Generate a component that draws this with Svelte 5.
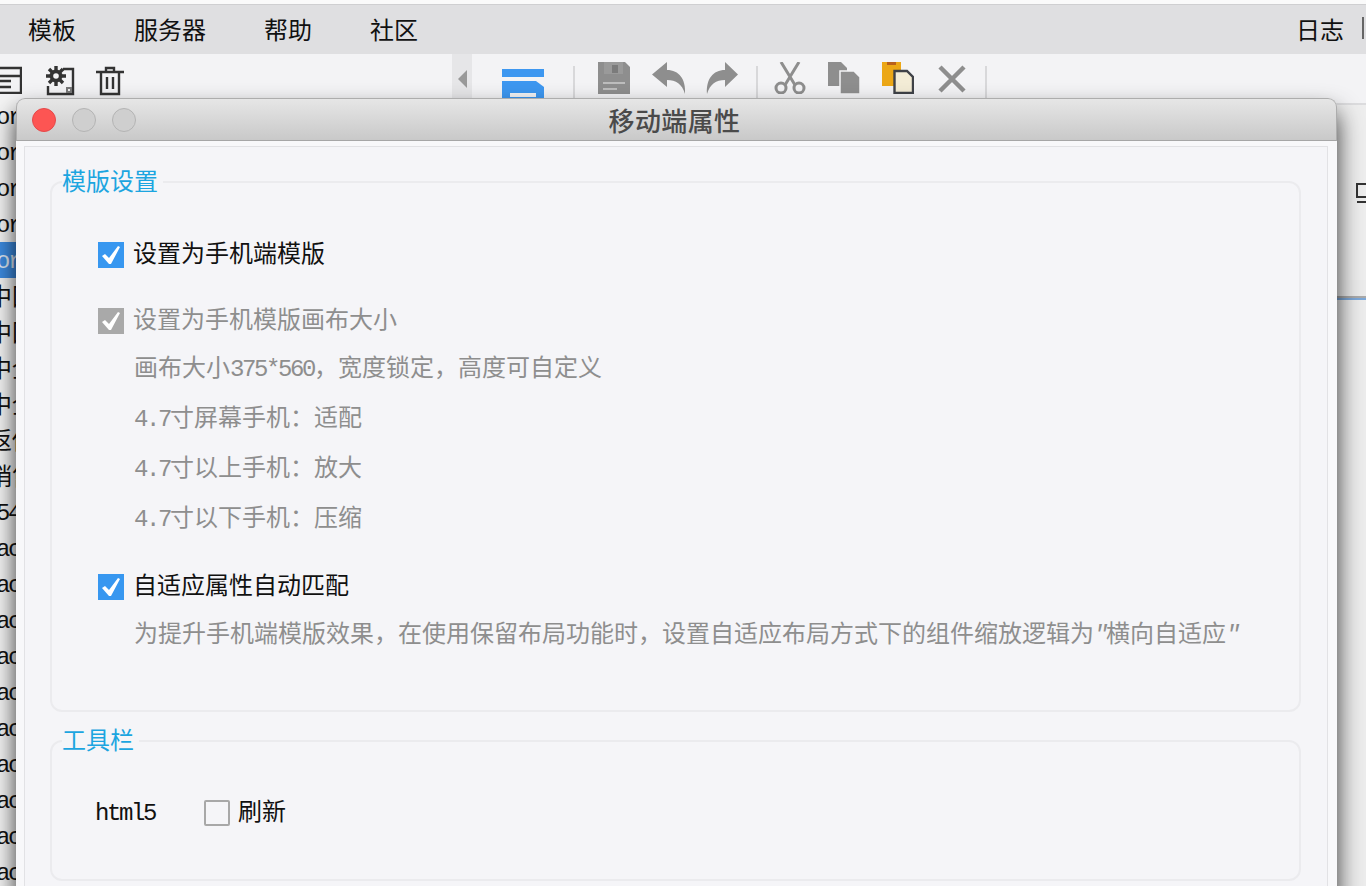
<script lang="ts">
  const menus = ['模板', '服务器', '帮助', '社区'];
  const rows = [
    'or', 'or', 'or', 'or', 'or',
    '中国', '中国', '中全', '中全', '返佣', '销售', '54',
    'ac', 'ac', 'ac', 'ac', 'ac', 'ac', 'ac', 'ac', 'ac', 'ac'
  ];
  const selected = 4;
  const sizes = [
    ['4.7', '寸屏幕手机：适配'],
    ['4.7', '寸以上手机：放大'],
    ['4.7', '寸以下手机：压缩']
  ];
</script>

{#snippet tick()}
  <svg width="18" height="18" viewBox="0 0 18 18" fill="#fff"><path d="M0 10L3 8L7 12L16 0L18 1L9 18H7Z"/></svg>
{/snippet}

<div class="page">
  <div class="menubar">
    {#each menus as m}
      <span>{m}</span>
    {/each}
    <span class="log">日志</span>
    <i class="bar-sep"></i>
  </div>

  <div class="toolbar">
    <div class="tools-left">
      <svg class="ic-form" width="22" height="28" viewBox="0 0 22 28" fill="none" stroke="#333" stroke-width="2.4">
        <path d="M0 2H21V27H0M0 10H21M0 15H11M0 21H11"/>
      </svg>
      <svg class="ic-gear" width="30" height="30" viewBox="0 0 30 30" fill="none">
        <path d="M18 3H28V28H3V20" stroke="#333" stroke-width="2.4"/>
        <path d="M11 0V20M1 10H21M4 3L18 17M18 3L4 17" stroke="#333" stroke-width="3.4"/>
        <circle cx="11" cy="10" r="6.500" fill="#333"/>
        <circle cx="11" cy="10" r="2.800" fill="#f3f3f5"/>
        <rect x="21" y="21" width="6" height="6" fill="#777"/>
        <rect x="23" y="23" width="2" height="2" fill="#eee"/>
      </svg>
      <svg class="ic-trash" width="28" height="30" viewBox="0 0 28 30" fill="none" stroke="#333" stroke-width="2.4">
        <path d="M0 6H28M10 6V2H18V6M5 6V28H23V6M11 11V23M17 11V23"/>
      </svg>
    </div>

    <div class="handle"><i></i></div>

    <svg class="ic-publish" width="44" height="30" viewBox="0 0 44 30">
      <rect x="0" y="0" width="42" height="8" fill="#3d97f0"/>
      <path d="M0 12H34L42 18V30H0Z" fill="#3d97f0"/>
      <rect x="8" y="24" width="26" height="4" fill="#f3f3f5"/>
    </svg>
    <i class="tool-sep first"></i>

    <svg class="ic-save" width="32" height="32" viewBox="0 0 32 32">
      <path d="M0 0H27L32 5V32H0Z" fill="#8e8e8e"/>
      <rect x="6" y="0" width="19" height="12" fill="#9a9a9a"/>
      <rect x="14" y="3" width="6" height="8" fill="#7b7b7b"/>
      <rect x="5" y="20" width="22" height="2" fill="#bdbdbd"/>
      <rect x="5" y="26" width="14" height="2" fill="#bdbdbd"/>
    </svg>
    <svg class="ic-undo" width="34" height="32" viewBox="0 0 34 32">
      <path d="M15 0V8C27 8 34 17 33 32C30 22 24 18 15 18V25L0 12.500Z" fill="#8e8e8e"/>
    </svg>
    <svg class="ic-redo" width="34" height="32" viewBox="0 0 34 32">
      <path d="M19 0V8C7 8 0 17 1 32C4 22 10 18 19 18V25L32 12.500Z" fill="#8e8e8e"/>
    </svg>
    <i class="tool-sep"></i>

    <svg class="ic-cut" width="32" height="32" viewBox="0 0 32 32" fill="none" stroke="#8e8e8e" stroke-width="3">
      <path d="M7 0L21 23M25 0L11 23"/>
      <circle cx="7" cy="26" r="5"/>
      <circle cx="25" cy="26" r="5"/>
    </svg>
    <svg class="ic-copy" width="32" height="32" viewBox="0 0 32 32">
      <path d="M0 0H13L19 6V24H0Z" fill="#8e8e8e"/>
      <path d="M12 9H26L32 15V32H12Z" fill="#8e8e8e" stroke="#f3f3f5" stroke-width="1.500"/>
    </svg>
    <svg class="ic-paste" width="32" height="32" viewBox="0 0 32 32">
      <rect x="0" y="0" width="19" height="24" fill="#eca716"/>
      <rect x="5" y="0" width="9" height="3" fill="#b9601c"/>
      <path d="M12.500 9H25L31 15V31H12.500Z" fill="#f3ecd6" stroke="#3f4248" stroke-width="2.400"/>
    </svg>
    <svg class="ic-close" width="28" height="28" viewBox="0 0 28 28" stroke="#8e8e8e" stroke-width="4.500">
      <path d="M2 2L26 26M26 2L2 26"/>
    </svg>
    <i class="tool-sep last"></i>
  </div>

  <div class="under">
    <ul class="tree">
      {#each rows as r, i}
        <li class:sel={i === selected} class:cjk={/[^\x00-\x7f]/.test(r)}>{r}</li>
      {/each}
    </ul>
    <div class="side">
      <svg width="20" height="22" viewBox="0 0 20 22" fill="none" stroke="#333" stroke-width="2">
        <path d="M1 2H19V15H1ZM1 20H19"/>
      </svg>
    </div>
    <div class="side-bottom"></div>
  </div>

  <section class="dialog">
    <header class="titlebar">
      <div class="lights">
        <i class="close"></i>
        <i></i>
        <i></i>
      </div>
      <h1>移动端属性</h1>
    </header>

    <div class="panel">
      <fieldset class="group-template">
        <legend>模版设置</legend>

        <label class="check first">
          <span class="box on">{@render tick()}</span>
          <span class="txt">设置为手机端模版</span>
        </label>

        <label class="check muted second">
          <span class="box dis">{@render tick()}</span>
          <span class="txt">设置为手机模版画布大小</span>
        </label>
        <div class="notes">
          <p>画布大小<span class="num">375*560</span>，宽度锁定，高度可自定义</p>
          {#each sizes as s}
            <p><span class="num">{s[0]}</span>{s[1]}</p>
          {/each}
        </div>

        <label class="check third">
          <span class="box on">{@render tick()}</span>
          <span class="txt">自适应属性自动匹配</span>
        </label>
        <div class="notes last">
          <p>为提升手机端模版效果，在使用保留布局功能时，设置自适应布局方式下的组件缩放逻辑为<span class="num quote">"</span>横向自适应<span class="num quote">"</span></p>
        </div>
      </fieldset>

      <fieldset class="group-toolbar">
        <legend>工具栏</legend>
        <div class="tool-row">
          <span class="num">html5</span>
          <label class="check plain">
            <span class="box off"></span>
            <span class="txt">刷新</span>
          </label>
        </div>
      </fieldset>
    </div>
  </section>
</div>

<style>
  :global(body) {
    margin: 0;
  }

  .page {
    position: relative;
    width: 1366px;
    height: 886px;
    box-sizing: border-box;
    padding-top: 4px;
    overflow: hidden;
    background: #fafafa;
    font-family: "Noto Sans CJK SC", "Liberation Sans", sans-serif;
    font-size: 24px;
    color: #111;
  }

  .menubar {
    display: flex;
    align-items: center;
    gap: 58px;
    height: 50px;
    padding: 0 0 3px 28px;
    background: #dfdfe1;
    border-top: 1px solid #cfcfd1;
    box-sizing: border-box;
  }

  .log {
    margin-left: auto;
    margin-right: -40px;
  }

  .bar-sep {
    width: 2px;
    height: 22px;
    background: #666;
    margin-right: 2px;
  }

  .toolbar {
    display: flex;
    align-items: flex-start;
    height: 51px;
    box-sizing: border-box;
    background: #f3f3f5;
    border-bottom: 2px solid #dcdcde;
  }

  .tools-left {
    display: flex;
    width: 452px;
    flex: none;
    padding-top: 12px;
    box-sizing: border-box;
  }

  .ic-gear {
    margin-left: 23px;
  }

  .ic-trash {
    margin-left: 21px;
  }

  .handle {
    flex: none;
    width: 20px;
    height: 46px;
    display: flex;
    align-items: center;
    justify-content: center;
    background: #e6e6e8;
  }

  .handle i {
    width: 0;
    height: 0;
    margin-top: 4px;
    border-style: solid;
    border-width: 9px 9px 9px 0;
    border-color: transparent #999 transparent transparent;
  }

  .toolbar > svg {
    flex: none;
    margin-top: 8px;
  }

  .toolbar > .ic-publish {
    margin: 15px 27px 0 30px;
  }

  .tool-sep {
    flex: none;
    width: 2px;
    height: 32px;
    margin: 12px 0 0 16px;
    background: #d8d8da;
  }

  .tool-sep.first {
    margin-left: 0;
  }

  .tool-sep.last {
    margin-left: 19px;
  }

  .ic-save {
    margin-left: 23px;
  }

  .ic-undo {
    margin-left: 22px;
  }

  .ic-redo {
    margin-left: 20px;
  }

  .ic-cut {
    margin-left: 16px;
  }

  .ic-copy,
  .ic-paste {
    margin-left: 22px;
  }

  .toolbar > .ic-close {
    margin: 11px 0 0 24px;
  }

  .under {
    position: absolute;
    left: 0;
    right: 0;
    top: 98px;
    bottom: 0;
  }

  .tree {
    margin: 0;
    padding: 0;
    list-style: none;
    width: 16px;
    background: #f4f4f4;
    overflow: hidden;
    height: 100%;
  }

  .tree li {
    height: 36px;
    line-height: 40px;
    width: 40px;
    font-family: "Liberation Mono", monospace;
    font-size: 24px;
    letter-spacing: -2.4px;
    white-space: nowrap;
    text-indent: -4px;
  }

  .tree li.cjk {
    line-height: 34px;
    font-family: "Noto Sans CJK SC", sans-serif;
    letter-spacing: 0;
    text-indent: -12px;
  }

  .tree li.sel {
    background: #3d8be0;
    color: #dfe8f5;
  }

  .side {
    position: absolute;
    left: 1337px;
    right: 0;
    top: 7px;
    height: 175px;
    background: #eeeeee;
    box-sizing: border-box;
    padding: 77px 0 0 19px;
  }

  .side svg {
    display: block;
  }

  .side-bottom {
    position: absolute;
    left: 1337px;
    right: 0;
    top: 182px;
    bottom: 0;
    background: #ededed;
    border-top: 16px solid #ececec;
    box-shadow: inset 0 2px 0 #aaa, inset 0 4px 0 #7da9da;
  }

  .dialog {
    position: absolute;
    left: 16px;
    top: 98px;
    width: 1321px;
    height: 800px;
    box-sizing: border-box;
    background: #f8f8fa;
    border-radius: 9px 9px 0 0;
    box-shadow: 0 14px 24px rgba(0, 0, 0, 0.8);
  }

  .titlebar {
    position: relative;
    height: 43px;
    box-sizing: border-box;
    display: flex;
    align-items: center;
    justify-content: center;
    border: 1px solid #adadad;
    border-bottom-color: #a6a6a6;
    border-radius: 9px 9px 0 0;
    background: linear-gradient(#e6e6e6, #c9c9c9);
  }

  .lights {
    position: absolute;
    left: 15px;
    top: 9px;
    display: flex;
    gap: 16px;
  }

  .lights i {
    width: 24px;
    height: 24px;
    box-sizing: border-box;
    border-radius: 50%;
    border: 1px solid #b4b4b4;
    background: #cfcfcf;
  }

  .lights i.close {
    background: #fd5553;
    border-color: #e5494a;
  }

  h1 {
    margin: 0 4px 0 0;
    font-size: 26px;
    font-weight: 500;
    line-height: 1;
    letter-spacing: 0.4px;
    color: #4a4a4a;
  }

  .panel {
    margin: 5px 9px 0 8px;
    padding: 19px 26px 0 25px;
    height: 760px;
    box-sizing: border-box;
    background: #f5f5f8;
    border: 1px solid #e2e2e5;
  }

  fieldset {
    margin: 0;
    padding: 0;
    min-width: 0;
    border: 2px solid #ebebee;
    border-radius: 12px;
  }

  legend {
    margin-left: 10px;
    padding: 0 5px 0 0;
    height: 32px;
    line-height: 28px;
    color: #1ca5e0;
  }

  .group-template {
    padding-bottom: 52px;
  }

  .group-toolbar {
    margin-top: 13px;
    height: 156px;
    box-sizing: border-box;
  }

  .check {
    display: flex;
    align-items: center;
    gap: 9px;
    height: 26px;
    line-height: 26px;
    margin-left: 46px;
  }

  .txt {
    margin-top: -7px;
  }

  .check.first {
    margin-top: 44px;
  }

  .check.second {
    margin-top: 40px;
  }

  .check.third {
    margin-top: 32px;
  }

  .check.muted,
  .notes {
    color: #8e8e8e;
  }

  .box {
    flex: none;
    width: 26px;
    height: 26px;
    box-sizing: border-box;
    display: flex;
    align-items: center;
    justify-content: center;
  }

  .box.on {
    background: #3797f0;
  }

  .box.dis {
    background: #a9a9a9;
  }

  .box.off {
    border: 2px solid #a8a8a8;
    border-radius: 2px;
    background: #f5f5f8;
  }

  .notes {
    margin: 8px 0 0 82px;
  }

  .notes p {
    margin: 0;
    height: 50px;
    line-height: 48px;
    white-space: nowrap;
  }

  .num {
    font-family: "Liberation Mono", monospace;
    font-size: 24px;
    letter-spacing: -2.4px;
  }

  .quote {
    font-style: italic;
  }

  .tool-row {
    display: flex;
    align-items: center;
    margin: 43px 0 0 43px;
    height: 26px;
  }

  .check.plain {
    margin-left: 49px;
    gap: 8px;
  }
</style>
